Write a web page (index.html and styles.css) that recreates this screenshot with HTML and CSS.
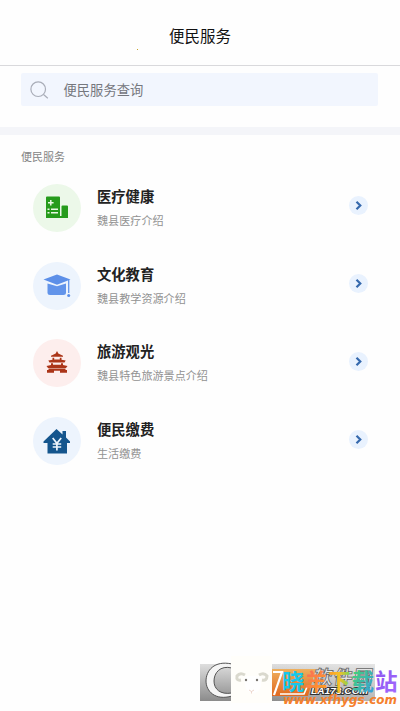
FILE: index.html
```html
<!DOCTYPE html>
<html lang="zh-CN">
<head>
<meta charset="utf-8">
<title>便民服务</title>
<link rel="stylesheet" href="styles.css">
</head>
<body>
<header class="header"><h1>便民服务</h1><i class="speck"></i></header>
<div class="search-area">
  <div class="search">
    <svg width="20" height="20" viewBox="0 0 20 20" fill="none" stroke="#a9adb8" stroke-width="1.2"><circle cx="8.200" cy="9.200" r="7.300"/><path d="M13.500 14.500l4.300 3.700"/></svg>
    <span>便民服务查询</span>
  </div>
</div>
<main class="services">
  <h2>便民服务</h2>
  <div class="row">
    <div class="icon green"><svg width="48" height="48" viewBox="0 0 48 48"><path d="M13 13.500q0-1 1-1h12q1 0 1 1V32h1.500V22.500q0-1 1-1h4.500q1 0 1 1V34H13z" fill="#269b1c"/><path d="M17.800 16v5.600M15 18.800h5.600M14.500 25.200h2M18 25.200h7M14.500 28.800h2M18 28.800h7" stroke="#e9f8e4" stroke-width="1.500"/></svg></div>
    <div class="label"><h3>医疗健康</h3><p>魏县医疗介绍</p></div>
    <div class="go"><svg width="19" height="19" viewBox="0 0 19 19"><path d="M7.500 5.700l3.800 3.800-3.800 3.800"/></svg></div>
  </div>
  <div class="row">
    <div class="icon blue"><svg width="48" height="48" viewBox="0 0 48 48"><path d="M10.500 17.500L24 12.500l13.500 5L24 22.800z" fill="#5c8fe8"/><path d="M14.500 21.500L24 24.300l9-2.800v9.500q0 2-2.500 2H17q-2.500 0-2.500-2z" fill="#6294ea"/><path d="M35.700 18v13" stroke="#6294ea" stroke-width="1.300"/><circle cx="35.700" cy="33.500" r="1.500" fill="#5c8fe8"/></svg></div>
    <div class="label"><h3>文化教育</h3><p>魏县教学资源介绍</p></div>
    <div class="go"><svg width="19" height="19" viewBox="0 0 19 19"><path d="M7.500 5.700l3.800 3.800-3.800 3.800"/></svg></div>
  </div>
  <div class="row">
    <div class="icon red"><svg width="48" height="48" viewBox="0 0 48 48" fill="#ab3518"><path d="M24 12l1.300 2.500 4.700 2.300v1H18v-1l4.700-2.300zM19.500 18.800h1.700v1.700h5.600v-1.700h1.700v1.900l4.200.8-1.200 1.900h-15l-1.200-1.900 4.200-.8zM18 24.300h2v1.500h8v-1.500h2V26l4.500 1-1.500 2H15l-1.500-2 4.500-1zM15.500 29.500h17V31h1.500v2.800h-7v-2h-6v2h-7V31h1.500z"/></svg></div>
    <div class="label"><h3>旅游观光</h3><p>魏县特色旅游景点介绍</p></div>
    <div class="go"><svg width="19" height="19" viewBox="0 0 19 19"><path d="M7.500 5.700l3.800 3.800-3.800 3.800"/></svg></div>
  </div>
  <div class="row">
    <div class="icon blue"><svg width="48" height="48" viewBox="0 0 48 48"><path d="M10.500 24.500L23.500 12l6 5.500V14h3.500v6.500l4 4v1.500h-3V36.500h-19.500V26h-4z" fill="#14558d"/><path d="M19.700 21l4.200 5.300 4.300-5.300M23.900 26v7.500M19.700 27h8.500M19.700 30h8.500" fill="none" stroke="#edf5fd" stroke-width="1.700"/></svg></div>
    <div class="label"><h3>便民缴费</h3><p>生活缴费</p></div>
    <div class="go"><svg width="19" height="19" viewBox="0 0 19 19"><path d="M7.500 5.700l3.800 3.800-3.800 3.800"/></svg></div>
  </div>
</main>
<svg class="watermark" width="200" height="61" viewBox="0 0 200 61">
  <defs>
    <linearGradient id="band" x2="0" y2="1"><stop offset="0" stop-color="#dedede"/><stop offset="1" stop-color="#8b8b8b"/></linearGradient>
    <linearGradient id="fade" x2="1" y2="0"><stop offset="0" stop-color="#eee" stop-opacity="0"/><stop offset="1" stop-color="#eee" stop-opacity=".45"/></linearGradient>
    <linearGradient id="tile" x2="0" y2="1"><stop offset="0" stop-color="#eeb05e"/><stop offset="1" stop-color="#e1681f"/></linearGradient>
    <linearGradient id="sheep" x2="1" y2="1"><stop offset=".2" stop-color="#fa7059"/><stop offset=".8" stop-color="#ff9b21"/></linearGradient>
    <linearGradient id="down" x2="1" y2="0"><stop offset="0" stop-color="#ff9728"/><stop offset=".5" stop-color="#f5bf25"/><stop offset="1" stop-color="#73d856"/></linearGradient>
    <linearGradient id="load" x2="1" y2="1"><stop offset="0" stop-color="#46dc62"/><stop offset="1" stop-color="#3599e8"/></linearGradient>
    <linearGradient id="stop" x2="1" y2="1"><stop offset="0" stop-color="#8751ed"/><stop offset="1" stop-color="#a56aff"/></linearGradient>
  </defs>
  <path d="M0 14h175v37H0z" fill="url(#band)"/>
  <path d="M70 14h105v37H70z" fill="url(#fade)"/>
  <path d="M32 14C14 10 6 21 6 31s9 20 26 15v-3C20 45 14 39 14 31S20 15 32 18z" fill="#f5f5f5" stroke="#555" stroke-width="1"/>
  <path d="M72 19h44l-8 27H72z" fill="url(#tile)"/>
  <path d="M73 22h9l-8 23" fill="none" stroke="#fff" stroke-width="2.200"/>
  <path d="M80 44h24l3-7" fill="none" stroke="#fff" stroke-width="1.600"/>
  <text class="site-name" transform="translate(113 34) skewX(-8)" textLength="59">软件园</text>
  <text class="site-code" x="111" y="44" textLength="57" lengthAdjust="spacingAndGlyphs">LA173.COM</text>
  <path d="M31 6h41v47H31z" fill="#fffefa"/>
  <path d="M44 27q3 -1 9-1t8 1v9q-2 7-8 7t-8-7z" fill="#fff"/>
  <g fill="none" stroke="#dad9ce" stroke-width="3"><path d="M45 25q-5-3-8 1-1 5 4 4"/><path d="M59 25q5-3 8 1 0 5-5 4"/></g>
  <g fill="#77736e"><circle cx="46" cy="30" r="1.200"/><circle cx="57" cy="30" r="1.200"/></g>
  <path d="M49 40l2.500 1.500 2.500-1.500M51.500 41.500v2" fill="none" stroke="#e8cdc0" stroke-width=".8"/>
  <g class="brand"><text x="82" y="40" fill="#18c7ec">晓</text><text x="105" y="40" fill="url(#sheep)">羊</text><text x="128" y="40" fill="url(#down)">下</text><text x="151.500" y="40" fill="url(#load)">载</text><text x="175" y="40" fill="url(#stop)">站</text></g>
  <text class="address" x="83" y="54" textLength="114" lengthAdjust="spacingAndGlyphs">www.xfhygs.com</text>
</svg>
</body>
</html>
```

FILE: styles.css
```css
* { box-sizing: border-box; }
body {
  position: relative;
  margin: 0;
  height: 711px;
  overflow: hidden;
  background: #fefefe;
  font-family: "Noto Sans CJK SC", sans-serif;
}
h1, h2, h3, p { margin: 0; font-weight: 400; }
.header {
  position: relative;
  height: 66px;
  padding-top: 23px;
  border-bottom: 1px solid #d9d9dc;
  text-align: center;
}
.header h1 { font-size: 15.5px; line-height: 24px; color: #111; }
.speck { position: absolute; left: 137px; top: 49px; width: 1px; height: 1px; background: #c5a328; }
.search-area { height: 69px; padding: 7px 22px 0 21px; border-bottom: 8px solid #f4f5f9; }
.search {
  display: flex;
  align-items: center;
  gap: 13.5px;
  height: 33px;
  padding-left: 9px;
  border-radius: 2px;
  background: #f2f6fe;
  color: #75777d;
  font-size: 13.3px;
}
.services { padding: 11px 31px 0 33px; }
.services h2 { margin-left: -12px; font-size: 11px; line-height: 20px; color: #858585; }
.row { display: flex; align-items: center; height: 77.8px; }
.services h2 + .row { margin-top: 3px; }
.icon { width: 48px; height: 48px; border-radius: 50%; }
.icon svg, .go svg { display: block; }
.green { background: #ecf8e9; }
.blue { background: #edf4fd; }
.red { background: #fdeeed; }
.label { flex: 1; padding-left: 16px; }
.label h3 { margin-top: -1px; font-size: 14.3px; line-height: 22px; font-weight: 700; color: #222; }
.label p { margin-top: 3px; font-size: 11.1px; line-height: 20px; color: #929292; }
.go { width: 19px; height: 19px; margin: -4px 1px 0 0; border-radius: 50%; background: #e9f2fe; }
.go path { fill: none; stroke: #3569ad; stroke-width: 2.2; }
.watermark { position: absolute; left: 200px; top: 650px; }
.site-name { font: 700 19px "Noto Sans CJK SC", sans-serif; fill: #e5e5e5; stroke: #666; stroke-width: .8px; }
.site-code { font: italic 700 9px "Liberation Sans", sans-serif; fill: #fff; stroke: #333; stroke-width: 2px; paint-order: stroke; }
.brand { font: 700 22.5px "Noto Sans CJK SC", sans-serif; }
.address { font: italic 700 13px "DejaVu Sans", sans-serif; fill: #f5802c; }
```
